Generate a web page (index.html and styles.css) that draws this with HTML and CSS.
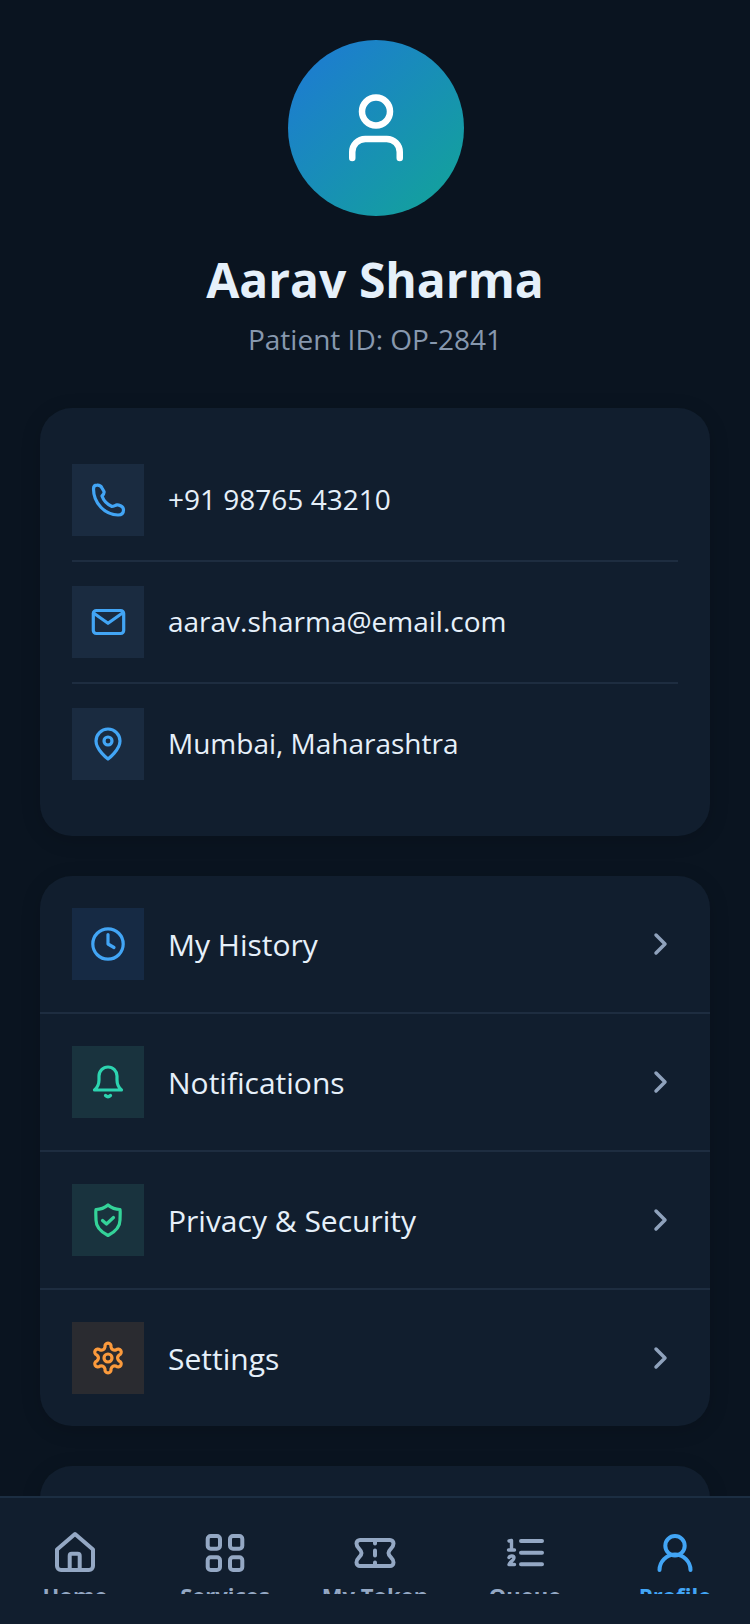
FILE: index.html
```html
<!DOCTYPE html>
<html>
<head>
	<meta charset="UTF-8">
	<meta name="viewport" content="width=device-width, initial-scale=1.0">
	<title>Profile</title>
	<link rel="stylesheet" href="styles.css">
</head>
<body>
	<div class="screen">
		<main class="content">
			<section class="profile-head">
				<div class="avatar">
					<svg width="72" height="72" viewBox="0 0 72 72" class="icon-line avatar-icon">
						<circle cx="36" cy="19.5" r="14"/>
						<path d="M12.25 66V60a13 13 0 0 1 13-13h21.5a13 13 0 0 1 13 13v6"/>
					</svg>
				</div>
				<h1 class="name">Aarav Sharma</h1>
				<p class="patient-id">Patient ID: OP-2841</p>
			</section>

			<section class="card contact-card">
				<div class="contact-row">
					<span class="icon-box box-blue">
						<svg width="40" height="40" viewBox="0 0 40 40" class="icon-line">
							<path d="M5.5 9C5.5 6.5 7 5.2 9 5.2C11.5 5 13 6 14 8L16 11.5C16.5 13 15.5 14.5 14 16C15.5 20.5 19.5 24.5 24 26.5C25.8 26.5 27.5 25 29 24.8C30 24.7 31 25 33 26C35 27 35.5 28.5 35.5 30C35.5 33.5 33 35 30 35C17 35 5.5 23 5.5 9Z"/>
						</svg>
					</span>
					<span class="contact-text">+91 98765 43210</span>
				</div>
				<div class="contact-row">
					<span class="icon-box box-blue">
						<svg width="40" height="40" viewBox="0 0 40 40" class="icon-line">
							<rect x="5.3" y="8.5" width="30.4" height="23" rx="3"/>
							<path d="M5.5 11L20 21.3L34.5 11"/>
						</svg>
					</span>
					<span class="contact-text">aarav.sharma@email.com</span>
				</div>
				<div class="contact-row">
					<span class="icon-box box-blue">
						<svg width="40" height="40" viewBox="0 0 40 40" class="icon-line">
							<path d="M20 35C20 35 8 26 8 17A12 12 0 0 1 32 17C32 26 20 35 20 35Z"/>
							<circle cx="20" cy="17" r="4"/>
						</svg>
					</span>
					<span class="contact-text">Mumbai, Maharashtra</span>
				</div>
			</section>

			<section class="card menu-card">
				<a class="menu-row">
					<span class="icon-box box-history">
						<svg width="40" height="40" viewBox="0 0 40 40" class="icon-line">
							<circle cx="20" cy="20" r="15.2"/>
							<path d="M20 10.5V20L26 23.5"/>
						</svg>
					</span>
					<span class="menu-text">My History</span>
					<svg width="36" height="36" viewBox="0 0 36 36" class="icon-line chevron"><path d="M14 9L23 18L14 27"/></svg>
				</a>
				<a class="menu-row">
					<span class="icon-box box-teal">
						<svg width="40" height="40" viewBox="0 0 40 40" class="icon-line">
							<path d="M6.5 28C10 25 11 22 11 18V14A9 9 0 0 1 29 14V18C29 22 30 25 33.5 28Z"/>
							<path d="M17.5 33.5Q20 36 22.5 33.5"/>
						</svg>
					</span>
					<span class="menu-text">Notifications</span>
					<svg width="36" height="36" viewBox="0 0 36 36" class="icon-line chevron"><path d="M14 9L23 18L14 27"/></svg>
				</a>
				<a class="menu-row">
					<span class="icon-box box-green">
						<svg width="40" height="40" viewBox="0 0 40 40" class="icon-line">
							<path d="M20 5C23.5 8 28 9.5 32 9.5C32.5 12 32 17 32 20C32 27 27 32 20 35.5C13 32 8 27 8 20C8 17 7.5 12 8 9.5C12 9.5 16.5 8 20 5Z"/>
							<path d="M14.5 20.5L18.5 24L25.5 17.5"/>
						</svg>
					</span>
					<span class="menu-text">Privacy &amp; Security</span>
					<svg width="36" height="36" viewBox="0 0 36 36" class="icon-line chevron"><path d="M14 9L23 18L14 27"/></svg>
				</a>
				<a class="menu-row">
					<span class="icon-box box-orange">
						<svg width="40" height="40" viewBox="0 0 40 40" class="icon-line">
							<path d="M17.02 8.89A3.05 3.05 0 1 1 22.98 8.89Q24 13.07 28.13 11.87A3.05 3.05 0 1 1 31.11 17.02Q28 20 31.11 22.98A3.05 3.05 0 1 1 28.13 28.13Q24 26.93 22.98 31.11A3.05 3.05 0 1 1 17.02 31.11Q16 26.93 11.87 28.13A3.05 3.05 0 1 1 8.89 22.98Q12 20 8.89 17.02A3.05 3.05 0 1 1 11.87 11.87Q16 13.07 17.02 8.89Z"/>
							<circle cx="20" cy="20" r="4"/>
						</svg>
					</span>
					<span class="menu-text">Settings</span>
					<svg width="36" height="36" viewBox="0 0 36 36" class="icon-line chevron"><path d="M14 9L23 18L14 27"/></svg>
				</a>
			</section>

			<section class="card logout-card"></section>
		</main>

		<nav class="bottom-nav">
			<a class="nav-item">
				<svg width="48" height="48" viewBox="0 0 48 48" class="icon-line">
					<path d="M6 20.5L24 5L42 20.5V37a4 4 0 0 1-4 4H10a4 4 0 0 1-4-4Z"/>
					<path d="M18.7 41V26.7a2 2 0 0 1 2-2h6a2 2 0 0 1 2 2V41"/>
				</svg>
				<span class="nav-label">Home</span>
			</a>
			<a class="nav-item">
				<svg width="48" height="48" viewBox="0 0 48 48" class="icon-line">
					<rect x="6.7" y="7" width="12.3" height="12.7" rx="3"/>
					<rect x="29" y="7" width="12.3" height="12.7" rx="3"/>
					<rect x="6.7" y="28.3" width="12.3" height="12.7" rx="3"/>
					<rect x="29" y="28.3" width="12.3" height="12.7" rx="3"/>
				</svg>
				<span class="nav-label">Services</span>
			</a>
			<a class="nav-item">
				<svg width="48" height="48" viewBox="0 0 48 48" class="icon-line">
					<path d="M9 11H39a3.5 3.5 0 0 1 3.5 3.5c0 5-5 5.5-5 9.5s5 4.5 5 9.5a3.5 3.5 0 0 1-3.5 3.5H9a3.5 3.5 0 0 1-3.5-3.5c0-5 5-5.5 5-9.5s-5-4.5-5-9.5A3.5 3.5 0 0 1 9 11Z"/>
					<path d="M24 12V14.5M24 21.5V26.5M24 33.5V36"/>
				</svg>
				<span class="nav-label">My Token</span>
			</a>
			<a class="nav-item">
				<svg width="48" height="48" viewBox="0 0 48 48" class="icon-line">
					<path d="M20 12H41M20 23.7H41M20 35.3H41"/>
					<path class="digit" d="M8 12L10.5 11.5V21M7.5 21H13.5M8 28.5C9 26.5 13 26.5 13 29C13 31.5 8.5 33 8 35.5H13.5"/>
				</svg>
				<span class="nav-label">Queue</span>
			</a>
			<a class="nav-item is-active">
				<svg width="48" height="48" viewBox="0 0 48 48" class="icon-line">
					<circle cx="24" cy="16.7" r="9.7"/>
					<path d="M8.5 41A15.5 15.5 0 0 1 39.5 41"/>
				</svg>
				<span class="nav-label">Profile</span>
			</a>
		</nav>
	</div>
</body>
</html>
```
FILE: styles.css
```css
html,
body {
	margin: 0;
	padding: 0;
	height: 100%;
	overflow: hidden;
}

body {
	font-family: 'Open Sans', sans-serif;
	background: #0a1420;
	color: #e6f0fa;
}

.screen {
	position: relative;
	width: 750px;
	height: 1624px;
	overflow: hidden;
}

.content {
	display: flex;
	flex-direction: column;
	gap: 40px;
	padding: 40px 40px 0;
}

.profile-head {
	display: flex;
	flex-direction: column;
	align-items: center;
	margin-bottom: 10px;
}

.avatar {
	width: 176px;
	height: 176px;
	border-radius: 50%;
	background: linear-gradient(135deg, #1e78d6, #12a597);
	display: flex;
	align-items: center;
	justify-content: center;
	margin: 0 0 31px 2px;
}

.icon-line {
	display: block;
	flex-shrink: 0;
	fill: none;
	stroke: currentColor;
	stroke-width: 3.2;
	stroke-linecap: round;
	stroke-linejoin: round;
}

.avatar-icon {
	color: #ffffff;
	stroke-width: 6.5;
}

.name {
	margin: 0 0 8px;
	font-size: 48px;
	font-weight: 700;
	color: #e6f0fa;
}

.patient-id {
	margin: 0;
	font-size: 28px;
	color: #8798ae;
}

.card {
	background: #111e2e;
	border-radius: 32px;
	box-shadow: 0 4px 20px rgba(0, 0, 0, 0.15);
}

.contact-card {
	padding: 32px;
}

.contact-row {
	display: flex;
	align-items: center;
	gap: 24px;
	padding: 24px 0;
	border-bottom: 2px solid #1e2d40;
}

.contact-row:last-child {
	border-bottom: none;
}

.contact-text {
	font-size: 28px;
	padding-bottom: 2px;
}

.icon-box {
	width: 72px;
	height: 72px;
	display: flex;
	align-items: center;
	justify-content: center;
	flex-shrink: 0;
}

.box-blue {
	background: #1a2b40;
	color: #42a5f5;
}

.box-history {
	background: #162a44;
	color: #42a5f5;
}

.box-teal {
	background: #19333e;
	color: #2dd4b0;
}

.box-green {
	background: #19333e;
	color: #34d399;
}

.box-orange {
	background: #2a2b30;
	color: #fb9a3c;
}

.menu-row {
	display: flex;
	align-items: center;
	gap: 24px;
	padding: 32px;
	border-bottom: 2px solid #1e2d40;
}

.menu-row:last-child {
	border-bottom: none;
}

.menu-text {
	flex: 1;
	font-size: 30px;
}

.chevron {
	color: #8fa2bc;
	stroke-width: 3.5;
}

.logout-card {
	height: 136px;
}

.bottom-nav {
	position: absolute;
	left: 0;
	right: 0;
	bottom: 0;
	height: 128px;
	box-sizing: border-box;
	display: grid;
	grid-template-columns: repeat(5, 1fr);
	align-items: start;
	padding-top: 31px;
	background: #111e2e;
	border-top: 2px solid #1c2e42;
}

.nav-item {
	display: flex;
	flex-direction: column;
	align-items: center;
	gap: 3px;
	height: 65px;
	overflow: hidden;
	color: #94a8c4;
}

.nav-item.is-active {
	color: #42a5f5;
}

.nav-item .icon-line {
	stroke-width: 4;
}

.nav-item .icon-line .digit {
	stroke-width: 3.4;
}

.nav-label {
	font-size: 22px;
	font-weight: 700;
	line-height: 30px;
}
```
